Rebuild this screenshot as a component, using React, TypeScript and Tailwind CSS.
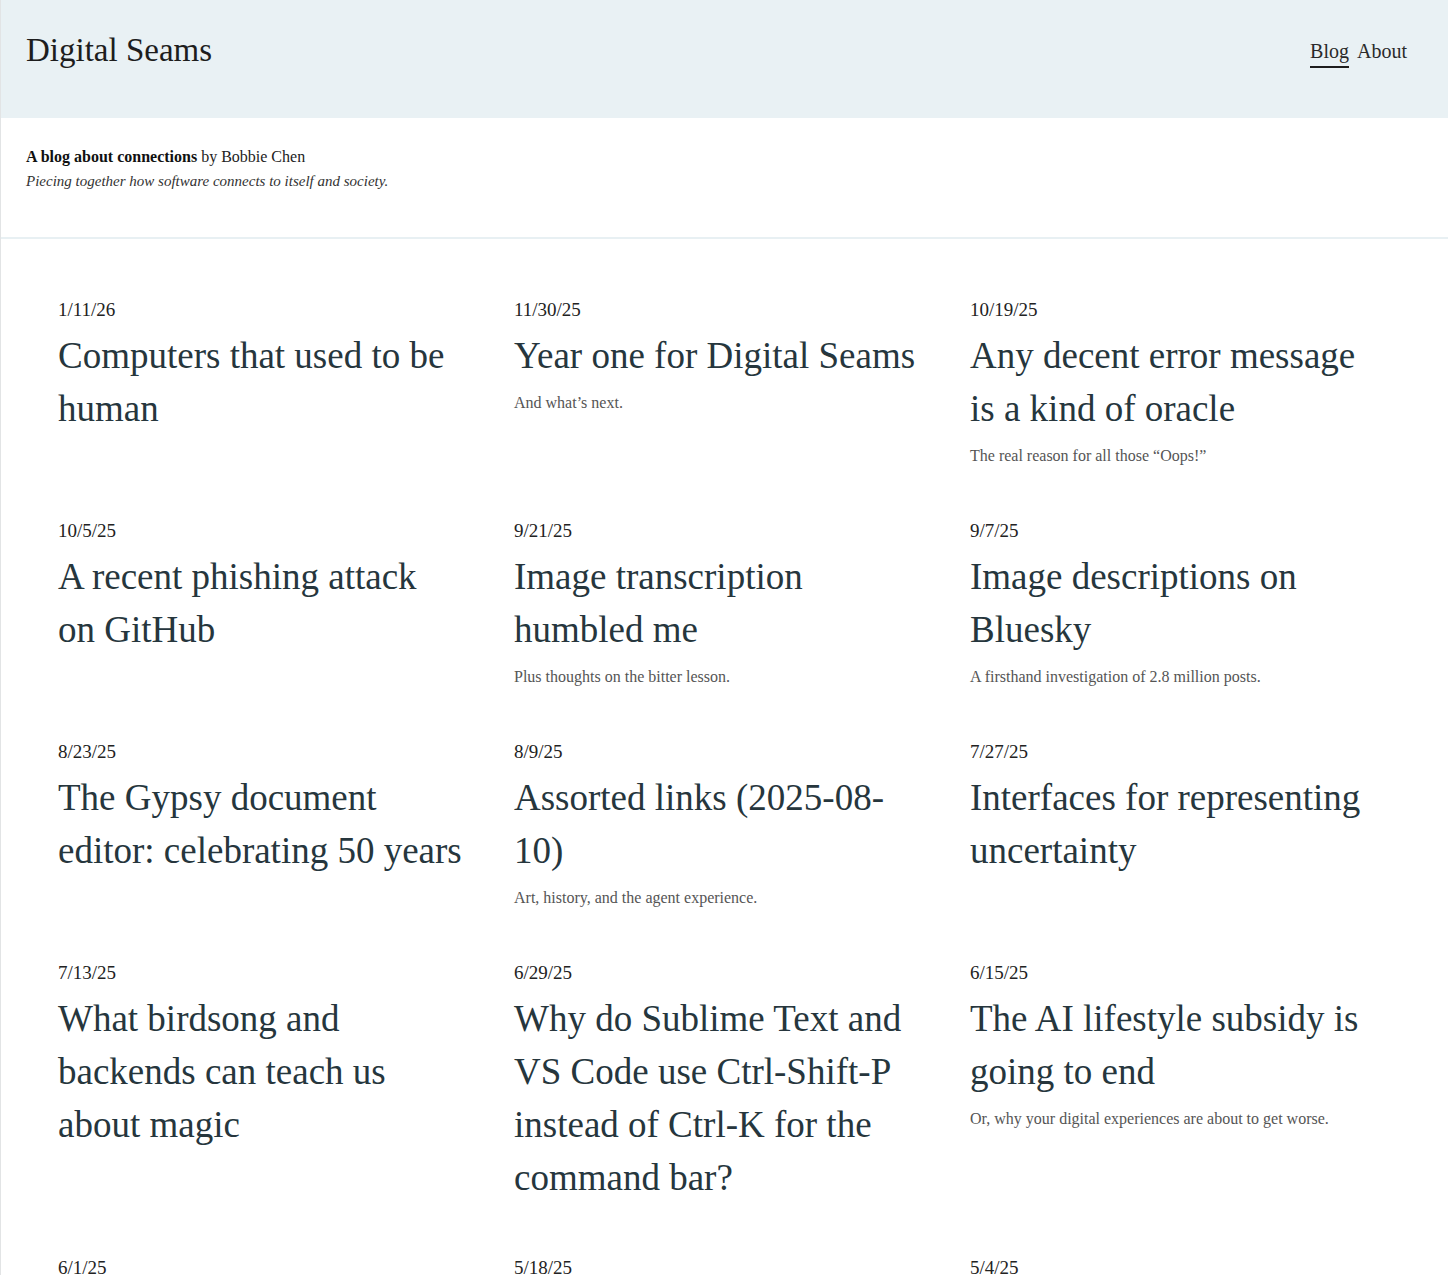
const posts = [
  { date: "1/11/26", title: ["Computers that used to be", "human"] },
  { date: "11/30/25", title: ["Year one for Digital Seams"], sub: "And what\u2019s next." },
  { date: "10/19/25", title: ["Any decent error message", "is a kind of oracle"], sub: "The real reason for all those \u201cOops!\u201d" },
  { date: "10/5/25", title: ["A recent phishing attack", "on GitHub"] },
  { date: "9/21/25", title: ["Image transcription", "humbled me"], sub: "Plus thoughts on the bitter lesson." },
  { date: "9/7/25", title: ["Image descriptions on", "Bluesky"], sub: "A firsthand investigation of 2.8 million posts." },
  { date: "8/23/25", title: ["The Gypsy document", "editor: celebrating 50 years"] },
  { date: "8/9/25", title: ["Assorted links (2025-08-", "10)"], sub: "Art, history, and the agent experience." },
  { date: "7/27/25", title: ["Interfaces for representing", "uncertainty"] },
  { date: "7/13/25", title: ["What birdsong and", "backends can teach us", "about magic"] },
  { date: "6/29/25", title: ["Why do Sublime Text and", "VS Code use Ctrl-Shift-P", "instead of Ctrl-K for the", "command bar?"] },
  { date: "6/15/25", title: ["The AI lifestyle subsidy is", "going to end"], sub: "Or, why your digital experiences are about to get worse." },
  { date: "6/1/25", title: ["Notes from the field"] },
  { date: "5/18/25", title: ["Small tools, big seams"] },
  { date: "5/4/25", title: ["Reading the error log"] },
];

function PostCard({ post }: { post: (typeof posts)[number] }) {
  return (
    <article className="flex flex-col">
      <div className="text-[19px] leading-[26px] text-[#222]">{post.date}</div>
      <h2 className="mt-[6px] text-[37px] leading-[53px] font-normal text-[#26363d]">
        {post.title.map((line) => (
          <span key={line} className="block whitespace-nowrap">
            {line}
          </span>
        ))}
      </h2>
      {post.sub && (
        <p className="mt-[10px] text-[16px] leading-[22px] text-[#555]">{post.sub}</p>
      )}
    </article>
  );
}

export default function App() {
  return (
    <div
      className="min-h-screen w-full border-l border-[#e2e4e5] bg-white"
      style={{ fontFamily: '"Liberation Serif", "Times New Roman", serif' }}
    >
      <header className="flex h-[118px] items-center justify-between bg-[#e9f1f4] pb-[14px] pl-[25px] pr-[41px]">
        <a className="pb-[3px] text-[33px] leading-none text-[#1d1d1d]">Digital Seams</a>
        <nav className="flex items-center gap-[8px] pt-[3px] text-[20px] text-[#2a2a2a]">
          <a className="border-b-2 border-[#1d1d1d] pb-[3px] leading-[24px]">Blog</a>
          <a className="border-b-2 border-transparent pb-[3px] leading-[24px]">About</a>
        </nav>
      </header>

      <section className="border-b-2 border-[#e8f0f3] pl-[25px] pt-[26px] pb-[43px] text-[15px] leading-[25px] text-[#222]">
        <p className="text-[16px]">
          <strong className="font-bold text-[#111]">A blog about connections</strong> by Bobbie Chen
        </p>
        <p className="italic text-[#333]">Piecing together how software connects to itself and society.</p>
      </section>

      <main className="pl-[57px] pt-[58px] pb-16">
        <div className="grid grid-cols-[404px_404px_404px] gap-x-[52px] gap-y-[51px]">
          {posts.map((post) => (
            <PostCard key={post.date} post={post} />
          ))}
        </div>
      </main>
    </div>
  );
}
